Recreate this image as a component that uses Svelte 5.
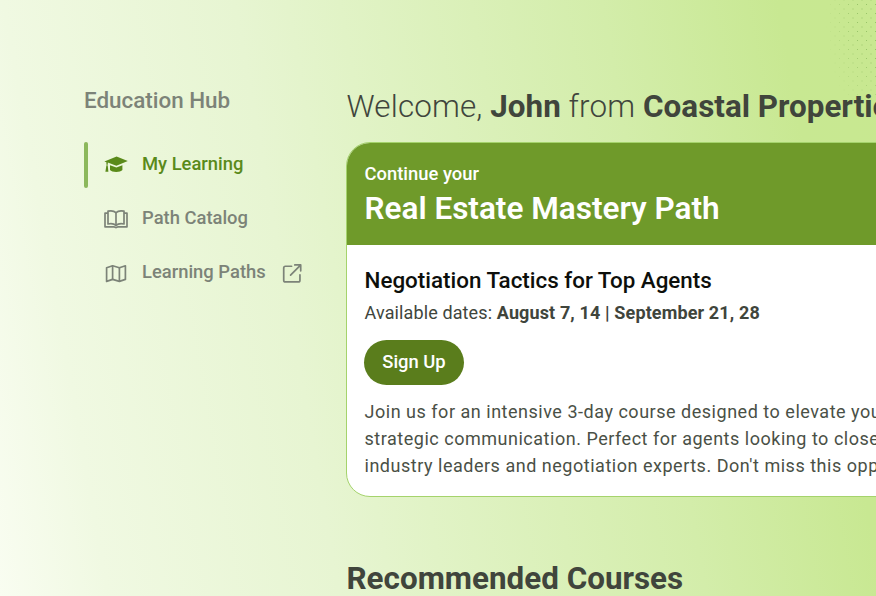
<script lang="ts">
  const nav = [
    { id: "learning", label: "My Learning", active: true },
    { id: "catalog", label: "Path Catalog", active: false },
    { id: "paths", label: "Learning Paths", active: false, external: true },
  ];
</script>

<div class="page">
  <div class="dots"></div>
  <aside class="sidebar">
    <h2 class="hub">Education Hub</h2>
    <nav class="nav">
      {#each nav as item (item.id)}
        <a class="nav-item" class:active={item.active} href="#{item.id}">
          <span class="nav-icon">
            {#if item.id === "learning"}
              <svg width="24" height="24" viewBox="0 0 24 24" fill="currentColor">
                <path d="M12.6 3.4 23.8 8 12.4 12.8 3.8 9.6 3.8 11.8 2.4 11.8 2.4 9.2 0.4 8.4Z" />
                <path d="M6 12.2 12.4 14.6 18.4 12.2 18.4 17C16.6 19.6 7.8 19.6 6 17Z" />
                <path d="M2.4 12.2 3.7 12.2 4.4 18.8 1.4 18.8Z" />
              </svg>
            {:else if item.id === "catalog"}
              <svg width="24" height="24" viewBox="0 0 24 24" fill="none" stroke="currentColor" stroke-width="1.7" stroke-linejoin="round">
                <path d="M4 4.2C7 3.6 10 3.8 12 5.6 14 3.8 17 3.6 20 4.2V17C17 16.4 14 16.6 12 18.4 10 16.6 7 16.4 4 17Z" />
                <path d="M12 5.6V18.4" />
                <path d="M4 6.2H1V19.8H10C11 19.8 11.4 20.6 12 20.6S13 19.8 14 19.8H23V6.2H20" />
              </svg>
            {:else}
              <svg width="24" height="24" viewBox="0 0 24 24" fill="none" stroke="currentColor" stroke-width="1.7" stroke-linejoin="round">
                <path d="M2.6 6.8 8.6 4.8 15.4 6.8 21.4 4.8V18.4L15.4 20.4 8.6 18.4 2.6 20.4Z" />
                <path d="M8.6 4.8V18.4M15.4 6.8V20.4" />
              </svg>
            {/if}
          </span>
          <span class="nav-label">{item.label}</span>
          {#if item.external}
            <svg class="external" width="21" height="21" viewBox="0 0 22 22" fill="none" stroke="currentColor" stroke-width="1.8" stroke-linecap="round" stroke-linejoin="round">
              <path d="M10 3.4H3.6C2.4 3.4 1.8 4 1.8 5.2V18C1.8 19.2 2.4 19.8 3.6 19.8H17C18.2 19.8 18.8 19.2 18.8 18V12.4" />
              <path d="M9 12.6 19.4 2.2M13.4 2H19.6V8.2" />
            </svg>
          {/if}
        </a>
      {/each}
    </nav>
  </aside>

  <main class="main">
    <h1 class="welcome">Welcome, <b>John</b> from <b>Coastal Properties</b></h1>

    <section class="card">
      <header class="card-head">
        <p class="eyebrow">Continue your</p>
        <h2 class="path-title">Real Estate Mastery Path</h2>
      </header>
      <div class="card-body">
        <h3 class="course-title">Negotiation Tactics for Top Agents</h3>
        <p class="dates">Available dates: <b>August 7, 14 | September 21, 28</b></p>
        <button class="signup">Sign Up</button>
        <p class="desc">
          Join us for an intensive 3-day course designed to elevate your<br />
          strategic communication. Perfect for agents looking to close<br />
          industry leaders and negotiation experts. Don't miss this opportunity
        </p>
      </div>
    </section>

    <h2 class="recommended">Recommended Courses</h2>
  </main>
</div>

<style>
  :global(body) {
    margin: 0;
    overflow: hidden;
  }

  .page {
    position: relative;
    display: flex;
    width: 876px;
    height: 596px;
    overflow: hidden;
    box-sizing: border-box;
    padding: 84px 0 0 84px;
    font-family: Roboto, "Liberation Sans", sans-serif;
    background: linear-gradient(80deg, #f9fdf1 0%, #f0f9e2 11%, #e7f5d2 34.6%, #e1f3c6 45.3%, #d3edaa 72%, #c8e892 90%, #c8e890 100%);
  }

  /* speckle in the top right corner */
  .dots {
    position: absolute;
    top: 0;
    right: 0;
    width: 50px;
    height: 100px;
    background-image:
      radial-gradient(circle, #98c468 0.7px, transparent 1px),
      radial-gradient(circle, #98c468 0.7px, transparent 1px);
    background-size: 9px 9px;
    background-position: 0 0, 4.5px 4.5px;
    -webkit-mask-image: radial-gradient(ellipse 50px 100px at 100% 20%, #000 40%, transparent 100%);
    mask-image: radial-gradient(ellipse 50px 100px at 100% 20%, #000 40%, transparent 100%);
  }

  .sidebar {
    flex: 0 0 262px;
  }

  .hub {
    margin: 0;
    font-size: 22.4px;
    line-height: 32px;
    font-weight: 500;
    color: #7c8378;
  }

  .nav {
    display: flex;
    flex-direction: column;
    gap: 8px;
    margin-top: 26px;
  }

  .nav-item {
    display: flex;
    align-items: center;
    height: 46px;
    color: #7c8378;
    text-decoration: none;
    font-size: 18.4px;
    font-weight: 500;
  }

  .nav-item::before {
    content: "";
    align-self: stretch;
    flex: 0 0 4px;
    margin-right: 16px;
    border-radius: 2px;
  }

  .nav-item.active {
    color: #5a8a1a;
  }

  .nav-item.active::before {
    background: #8cb85c;
  }

  .nav-icon {
    display: flex;
    width: 24px;
    margin-right: 14px;
  }

  .nav-label {
    padding-bottom: 3px;
  }

  .external {
    margin-left: 16px;
  }

  .main {
    flex: 0 0 auto;
    width: 900px;
    margin-top: 3px;
  }

  .welcome {
    margin: 0 0 15px 0.5px;
    font-size: 31.4px;
    line-height: 40px;
    font-weight: 350;
    letter-spacing: 0.15px;
    color: #40453c;
    white-space: nowrap;
  }

  .welcome b {
    font-weight: 700;
    letter-spacing: 0;
  }

  .card {
    border: 1px solid #a5d36c;
    border-radius: 24px;
    overflow: hidden;
    background: #fff;
  }

  .card-head {
    padding: 19px 17.5px 14px;
    background: #6f9a2a;
    color: #fff;
  }

  .eyebrow {
    margin: 0 0 1px;
    font-size: 18.4px;
    line-height: 24px;
    font-weight: 500;
  }

  .path-title {
    margin: 0;
    font-size: 31.5px;
    line-height: 44px;
    font-weight: 600;
  }

  .card-body {
    padding: 20px 17.5px 17px;
  }

  .course-title {
    margin: 0;
    font-size: 22.4px;
    line-height: 30px;
    font-weight: 500;
    color: #0d0f0b;
  }

  .dates {
    margin: 5px 0 0;
    font-size: 18px;
    line-height: 26px;
    letter-spacing: 0.12px;
    color: #40453c;
  }

  .dates b {
    font-weight: 700;
    letter-spacing: 0.13px;
  }

  .signup {
    display: block;
    width: 100px;
    height: 45px;
    margin: 14px 0 0 -0.5px;
    padding: 0 0 2px;
    border: 0;
    border-radius: 23px;
    background: #5a7d1c;
    color: #fff;
    font: 500 18.4px Roboto, "Liberation Sans", sans-serif;
  }

  .desc {
    margin: 13px 0 0;
    font-size: 18px;
    line-height: 27px;
    letter-spacing: 0.52px;
    color: #4a5046;
    white-space: nowrap;
  }

  .recommended {
    margin: 62px 0 0 0.5px;
    font-size: 31.4px;
    line-height: 40px;
    font-weight: 700;
    color: #40453c;
    white-space: nowrap;
  }
</style>
